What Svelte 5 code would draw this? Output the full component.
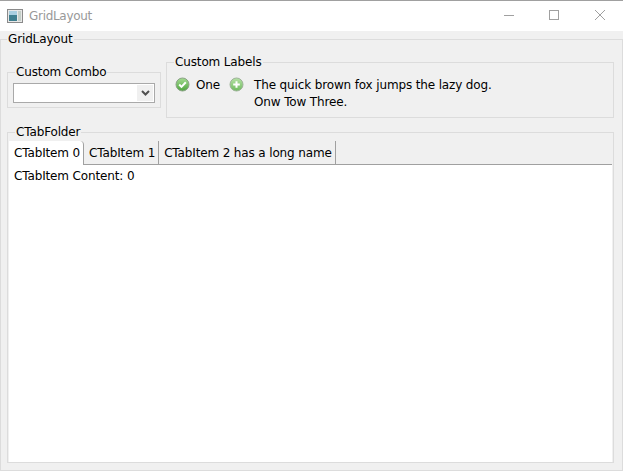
<script>
	const tabs = ['CTabItem 0', 'CTabItem 1', 'CTabItem 2 has a long name'];
	let active = $state(0);
</script>

<div class="window">
	<header class="titlebar">
		<svg class="app-icon" width="16" height="16" viewBox="0 0 16 16">
			<rect x="0.5" y="1.5" width="15" height="13" fill="#e8e8e8" stroke="#8a8a8a" />
			<rect x="2" y="3" width="8" height="10" fill="#3f7f8f" />
			<rect x="2" y="3" width="8" height="4" fill="#a9cfe0" />
			<rect x="11" y="3" width="3" height="10" fill="#c4cfc8" />
		</svg>
		<span class="title">GridLayout</span>
		<div class="controls">
			<svg width="12" height="12" viewBox="0 0 12 12"><path d="M2 6.5h10" stroke="#a0a0a0" /></svg>
			<svg width="12" height="12" viewBox="0 0 12 12"><rect x="1.5" y="1.5" width="9" height="9" fill="none" stroke="#a0a0a0" /></svg>
			<svg width="12" height="12" viewBox="0 0 12 12"><path d="M1 1l10 10M11 1L1 11" stroke="#a0a0a0" /></svg>
		</div>
	</header>

	<fieldset class="outer">
		<legend>GridLayout</legend>
		<div class="top-row">
			<fieldset class="combo-group">
				<legend>Custom Combo</legend>
				<div class="combo">
					<span class="arrow">
						<svg width="9" height="6" viewBox="0 0 9 6"><path d="M1 1l3.5 3.5L8 1" fill="none" stroke="#505050" stroke-width="2" /></svg>
					</span>
				</div>
			</fieldset>

			<fieldset class="labels-group">
				<legend>Custom Labels</legend>
				<div class="labels">
					<svg width="15" height="15" viewBox="0 0 15 15">
						<defs>
							<linearGradient id="ok" x1="0" y1="0" x2="0" y2="1">
								<stop offset="0" stop-color="#a5dc92" />
								<stop offset="1" stop-color="#4fa53f" />
							</linearGradient>
						</defs>
						<circle cx="7.5" cy="7.5" r="6.5" fill="url(#ok)" stroke="#8aa386" />
						<path d="M4.2 7.5l2.3 2.4L10.8 5.3" fill="none" stroke="#fff" stroke-width="2" />
					</svg>
					<span class="one">One</span>
					<svg width="15" height="15" viewBox="0 0 15 15">
						<defs>
							<linearGradient id="add" x1="0" y1="0" x2="0" y2="1">
								<stop offset="0" stop-color="#b6e2a6" />
								<stop offset="1" stop-color="#6fbb5e" />
							</linearGradient>
						</defs>
						<circle cx="7.5" cy="7.5" r="6.5" fill="url(#add)" stroke="#9db398" />
						<path d="M7.5 4.2v6.6M4.2 7.5h6.6" stroke="#fff" stroke-width="2" />
					</svg>
					<p>The quick brown fox jumps the lazy dog.<br />Onw Tow Three.</p>
				</div>
			</fieldset>
		</div>

		<fieldset class="tab-group">
			<legend>CTabFolder</legend>
			<div class="tabstrip">
				{#each tabs as tab, i}
					<button class="tab" class:active={i === active} onclick={() => (active = i)}>{tab}</button>
				{/each}
			</div>
			<div class="content">CTabItem Content: {active}</div>
		</fieldset>
	</fieldset>
</div>

<style>
	:global(body) {
		background: #f0f0f0;
	}

	.window {
		display: flex;
		flex-direction: column;
		height: 471px;
		overflow: hidden;
		background: #f0f0f0;
		color: #000;
		font: 12px "DejaVu Sans", sans-serif;
		letter-spacing: -0.14px;
	}

	.titlebar {
		display: flex;
		align-items: center;
		flex: none;
		height: 30px;
		padding-left: 7px;
		border-top: 1px solid #a0a0a0;
		background: #fff;
	}

	.app-icon {
		margin-right: 6px;
	}

	.title {
		color: #999;
		letter-spacing: -0.3px;
	}

	.controls {
		display: flex;
		gap: 34px;
		margin-left: auto;
		padding: 0 17px 2px 0;
	}

	fieldset {
		margin: 0;
		min-width: 0;
		border: 1px solid #dcdcdc;
	}

	legend {
		padding: 0 1px;
		line-height: 16px;
	}

	.outer {
		display: flex;
		flex-direction: column;
		flex: 1;
		min-height: 0;
		padding: 7px 8px 7px 6px;
	}

	.top-row {
		display: flex;
		align-items: center;
		gap: 5px;
	}

	.combo-group {
		flex: none;
		width: 154px;
		box-sizing: border-box;
		padding: 3px 5px 4px;
	}

	.combo-group legend {
		margin-left: 2px;
	}

	.labels-group legend {
		margin-left: -1px;
	}

	.tab-group legend {
		margin-left: 6px;
	}

	.combo {
		display: flex;
		justify-content: flex-end;
		height: 16px;
		border: 1px solid #a9a9a9;
		padding: 1px;
		background: #fff;
	}

	.arrow {
		display: flex;
		align-items: center;
		justify-content: center;
		width: 16px;
		background: #f0f0f0;
	}

	.labels-group {
		flex: 1;
		height: 64px;
		box-sizing: border-box;
		padding: 7px 8px 0;
	}

	.labels {
		display: flex;
		align-items: flex-start;
	}

	.labels svg {
		flex: none;
	}

	.one {
		margin: 0 9px 0 6px;
		line-height: 17px;
	}

	.labels p {
		margin: 0 0 0 10px;
		line-height: 17px;
	}

	.tab-group {
		display: flex;
		flex-direction: column;
		flex: 1;
		min-height: 0;
		margin-top: 6px;
		padding: 0 1px;
	}

	.tabstrip {
		display: flex;
		flex: none;
		height: 25px;
		box-sizing: border-box;
		padding-top: 1px;
		border-bottom: 1px solid #a0a0a0;
	}

	.tab {
		height: 23px;
		padding: 0 3px 0 5px;
		border: 0;
		border-right: 1px solid #a0a0a0;
		border-radius: 0;
		background: none;
		color: inherit;
		font: inherit;
		letter-spacing: inherit;
	}

	.tab.active {
		height: 24px;
		border-top-right-radius: 4px;
		background: #fff;
	}

	.content {
		flex: 1;
		padding: 3px 5px;
		background: #fff;
		line-height: 17px;
	}
</style>
